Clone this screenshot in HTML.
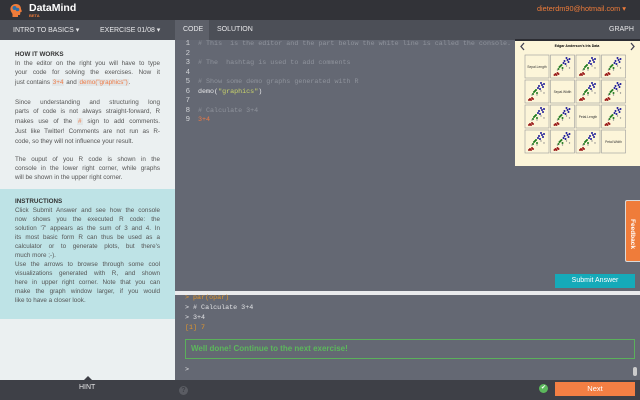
<!DOCTYPE html>
<html><head><meta charset="utf-8"><style>
*{margin:0;padding:0;box-sizing:border-box}
body{width:640px;height:400px;overflow:hidden;position:relative;background:#646873;font-family:"Liberation Sans",sans-serif}
.a{position:absolute}
.hdr{left:0;top:0;width:640px;height:20px;background:#323338}
.tabs{left:0;top:20px;width:640px;height:20px;background:#4c4f57;color:#e8e8ea;font-size:7px}
.left{left:0;top:40px;width:175px;height:340px;background:#ebf0f1}
.instr{left:0;top:189px;width:175px;height:130px;background:#bee3e6}
.l{position:absolute;left:15px;width:145px;height:9px;font-size:6.3px;line-height:9px;color:#555;text-align:justify;text-align-last:justify;white-space:nowrap}
.l.e{text-align-last:left}
.l b{color:#333}
.c{color:#ee7a45;background:#e2e6e7;padding:0 1px}
.code{font-family:"Liberation Mono",monospace;font-size:6.7px;line-height:9.55px;color:#8f939c;white-space:pre}
.ln{left:181px;top:40px;color:#d0d2d6;text-align:right;width:9px;font-size:7.4px}
.cd{left:198px;top:40px}
.con{left:175px;top:295px;width:465px;height:85px;background:#646873;font-family:"Liberation Mono",monospace;font-size:6.7px;line-height:10px;color:#e2e3e6;white-space:pre}
.foot{left:0;top:380px;width:640px;height:20px;background:#3e4047}
</style></head><body>
<div class="a hdr"></div>
<svg class="a" style="left:9px;top:3px" width="15" height="15" viewBox="0 0 15 15"><path d="M7 1C3 1 1 4 1.5 7 2 9 3 10 3.5 11L3.5 14 9 14 9 12 11 12 11.5 9 13 8.5 12 6C12 3 10 1 7 1Z" fill="#ef7c3a"/><circle cx="5.5" cy="5" r="2" fill="#2e6fa8"/><circle cx="8.5" cy="6.5" r="1.8" fill="#2e6fa8"/></svg>
<div class="a" style="left:29px;top:2px;color:#fff;font-weight:bold;font-size:10.5px">DataMind</div>
<div class="a" style="left:29px;top:13px;color:#ef7c3a;font-weight:bold;font-size:4px">BETA</div>
<div class="a" style="left:537px;top:4px;color:#ef7c3a;font-size:7.3px">dieterdm90@hotmail.com ▾</div>
<div class="a tabs">
<div class="a" style="left:13px;top:6px">INTRO TO BASICS ▾</div>
<div class="a" style="left:100px;top:6px">EXERCISE 01/08 ▾</div>
<div class="a" style="left:175px;top:0;width:34px;height:20px;background:#5d6069"></div>
<div class="a" style="left:183px;top:6px">CODE</div>
<div class="a" style="left:217px;top:6px">SOLUTION</div>
<div class="a" style="left:609px;top:6px">GRAPH</div>
</div>
<div class="a left"></div>
<div class="a instr"></div>

<div class="l e" style="top:49.5px"><b>HOW IT WORKS</b></div>
<div class="l" style="top:58.5px">In the editor on the right you will have to type</div>
<div class="l" style="top:67.5px">your code for solving the exercises. Now it</div>
<div class="l e" style="top:77.5px">just contains <span class="c">3+4</span> and <span class="c">demo("graphics")</span>.</div>
<div class="l" style="top:97.5px">Since understanding and structuring long</div>
<div class="l" style="top:106.5px">parts of code is not always straight-forward, R</div>
<div class="l" style="top:116.5px">makes use of the <span class="c">#</span> sign to add comments.</div>
<div class="l" style="top:126.5px">Just like Twitter! Comments are not run as R-</div>
<div class="l e" style="top:136.5px">code, so they will not influence your result.</div>
<div class="l" style="top:154.5px">The ouput of you R code is shown in the</div>
<div class="l" style="top:163.5px">console in the lower right corner, while graphs</div>
<div class="l e" style="top:172.5px">will be shown in the upper right corner.</div>

<div class="l e" style="top:196.5px"><b>INSTRUCTIONS</b></div>
<div class="l" style="top:205.5px">Click Submit Answer and see how the console</div>
<div class="l" style="top:214.5px">now shows you the executed R code: the</div>
<div class="l" style="top:223.5px">solution '7' appears as the sum of 3 and 4. In</div>
<div class="l" style="top:232.5px">its most basic form R can thus be used as a</div>
<div class="l" style="top:241.5px">calculator or to generate plots, but there's</div>
<div class="l e" style="top:250.5px">much more ;-).</div>
<div class="l" style="top:259.5px">Use the arrows to browse through some cool</div>
<div class="l" style="top:268.5px">visualizations generated with R, and shown</div>
<div class="l" style="top:277.5px">here in upper right corner. Note that you can</div>
<div class="l" style="top:286.5px">make the graph window larger, if you would</div>
<div class="l e" style="top:295.5px">like to have a closer look.</div>

<div class="a code ln">1
2
3
4
5
6
7
8
9</div>
<div class="a code cd"># This  is the editor and the part below the white line is called the console.

# The  hashtag is used to add comments

# Show some demo graphs generated with R
<span style="color:#e8e8ea">demo(</span><span style="color:#c9d36a">"graphics"</span><span style="color:#e8e8ea">)</span>

# Calculate 3+4
<span style="color:#ee7a45">3+4</span></div>
<svg class="a" style="left:515px;top:39px" width="125" height="127" viewBox="0 0 125 127">
<rect width="125" height="127" fill="#fcf5d9"/><rect width="125" height="2" fill="#2c2d33"/>
<text x="62" y="8" font-size="3.5" text-anchor="middle" font-family="Liberation Sans" font-weight="bold">Edgar Anderson's Iris Data</text>
<path d="M9 4 6 7.5 9 11M116 4 119 7.5 116 11" stroke="#445" stroke-width="1.3" fill="none"/>
<defs><g id="s"><g fill="#1a1a9a"><circle cx="14" cy="6" r="1"/><circle cx="17" cy="5" r="1"/><circle cx="15" cy="9" r="1"/><circle cx="19" cy="4" r="1"/><circle cx="13" cy="8" r="1"/><circle cx="18" cy="7" r="1"/><circle cx="16" cy="3" r="1"/></g><g fill="#1f7a1f"><circle cx="9" cy="12" r="1"/><circle cx="11" cy="10" r="1"/><circle cx="8" cy="14" r="1"/><circle cx="12" cy="13" r="1"/><circle cx="10" cy="11" r="1"/></g><g fill="#9a1a1a"><circle cx="5" cy="19" r="1"/><circle cx="7" cy="18" r="1"/><circle cx="4" cy="20" r="1"/><circle cx="8" cy="19" r="1"/><circle cx="6" cy="20" r="1"/></g><g fill="#888"><circle cx="12" cy="15" r=".7"/><circle cx="16" cy="11" r=".7"/><circle cx="7" cy="15" r=".7"/><circle cx="19" cy="13" r=".7"/></g></g></defs>
<g fill="none" stroke="#999" stroke-width=".6">
<rect x="10" y="16" width="24" height="23"/><rect x="35.5" y="16" width="24" height="23"/><rect x="61" y="16" width="24" height="23"/><rect x="86.5" y="16" width="24" height="23"/>
<rect x="10" y="41" width="24" height="23"/><rect x="35.5" y="41" width="24" height="23"/><rect x="61" y="41" width="24" height="23"/><rect x="86.5" y="41" width="24" height="23"/>
<rect x="10" y="66" width="24" height="23"/><rect x="35.5" y="66" width="24" height="23"/><rect x="61" y="66" width="24" height="23"/><rect x="86.5" y="66" width="24" height="23"/>
<rect x="10" y="91" width="24" height="23"/><rect x="35.5" y="91" width="24" height="23"/><rect x="61" y="91" width="24" height="23"/><rect x="86.5" y="91" width="24" height="23"/></g>
<use href="#s" x="35.5" y="16"/><use href="#s" x="61" y="16"/><use href="#s" x="86.5" y="16"/>
<use href="#s" x="10" y="41"/><use href="#s" x="61" y="41"/><use href="#s" x="86.5" y="41"/>
<use href="#s" x="10" y="66"/><use href="#s" x="35.5" y="66"/><use href="#s" x="86.5" y="66"/>
<use href="#s" x="10" y="91"/><use href="#s" x="35.5" y="91"/><use href="#s" x="61" y="91"/>
<g font-size="3.3" font-family="Liberation Sans" text-anchor="middle" fill="#333"><text x="22" y="29">Sepal.Length</text><text x="47.5" y="54">Sepal.Width</text><text x="73" y="79">Petal.Length</text><text x="98.5" y="104">Petal.Width</text></g>
</svg>
<div class="a" style="left:625px;top:200px;width:15px;height:62px;background:#ef7c3a;border-radius:2px 0 0 2px;border:1px solid #d9d9d9;border-right:none"></div>
<div class="a" style="color:#fff;font-size:6.5px;transform:rotate(90deg);transform-origin:left top;left:636px;top:219px;font-weight:bold">Feedback</div>
<div class="a" style="left:555px;top:274px;width:80px;height:14px;background:#15aab9;color:#fff;font-size:7px;text-align:center;line-height:14px">Submit Answer</div>
<div class="a" style="left:175px;top:291px;width:465px;height:4px;background:#e9eaec"></div>
<div class="a con"><div class="a" style="left:10px;top:-2px"><span style="color:#e0952c">&gt; par(opar)</span>
&gt; # Calculate 3+4
&gt; 3+4
<span style="color:#e0952c">[1] 7</span></div>
<div class="a" style="left:10px;top:44px;width:450px;height:20px;border:1px solid #5bb05b;color:#5cb85c;font-family:'Liberation Sans',sans-serif;font-weight:bold;font-size:8px;line-height:18px;padding-left:5px">Well done! Continue to the next exercise!</div>
<div class="a" style="left:10px;top:70px">&gt;</div>
<div class="a" style="left:458px;top:72px;width:4px;height:9px;background:#ccc;border-radius:2px"></div>
</div>
<div class="a foot"></div>
<div class="a" style="left:79px;top:384px;color:#e8e8ea;font-size:7px">HINT</div>
<div class="a" style="left:84px;top:376px;width:0;height:0;border:4px solid transparent;border-bottom-color:#3e4047;border-top:none"></div>
<div class="a" style="left:179px;top:386px;width:9px;height:9px;border-radius:50%;background:#5a5c63;color:#3e4047;font-size:7px;text-align:center;line-height:9px;font-weight:bold">?</div>
<div class="a" style="left:539px;top:384px;width:9px;height:9px;border-radius:50%;background:#5cb85c;color:#fff;font-size:6px;text-align:center;line-height:9px">✔</div>
<div class="a" style="left:555px;top:382px;width:80px;height:14px;background:#f37f44;color:#fff;font-size:7.5px;text-align:center;line-height:14px">Next</div>
</body></html>
